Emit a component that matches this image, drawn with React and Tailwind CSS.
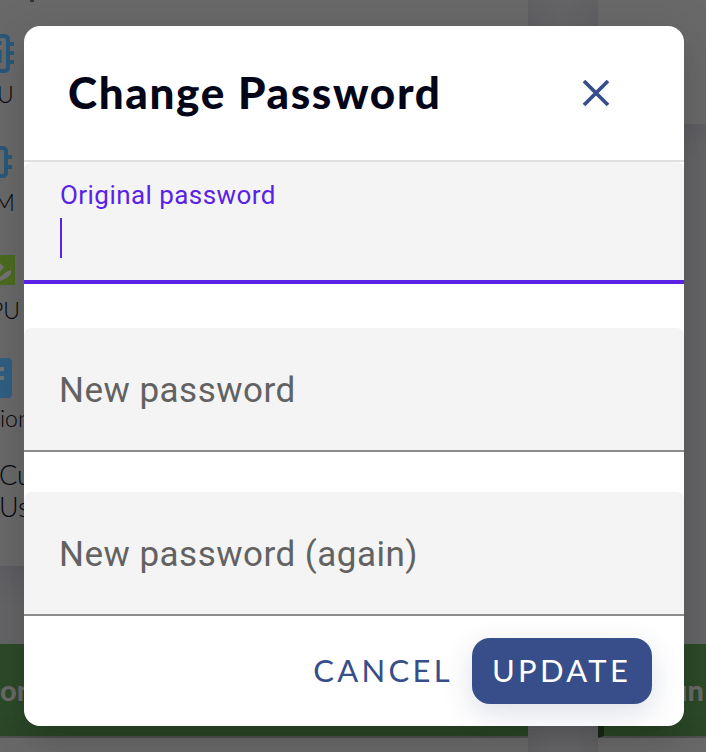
function Chip({ memory }) {
  return memory ? (
    <svg className="block h-[34px] w-[14px]" viewBox="0 0 14 34" fill="none" stroke="#28587a" strokeWidth="4">
      <path d="M-4 2H3Q6 2 6 6V26Q6 30 3 30H-4M6 11H12M6 21H12" />
    </svg>
  ) : (
    <svg className="block h-[42px] w-[16px]" viewBox="0 0 16 42" fill="none" stroke="#28587a" strokeWidth="4">
      <path d="M-4 3H4Q8 3 8 7V34Q8 38 4 38H-4M8 11H14M8 20H14M8 29H14" />
      <path d="M0 8V12M0 17V30" strokeWidth="3" />
    </svg>
  );
}

function Background() {
  return (
    <div className="absolute inset-0 flex gap-[70px] overflow-hidden bg-[#656567] font-['Lato',sans-serif] text-[#05050f]">
      <div className="flex w-[528px] shrink-0 flex-col">
        <div className="relative h-[566px] shrink-0 bg-[#696969] shadow-[0_8px_30px_rgba(40,40,70,0.2)]">
          <div className="absolute top-0 left-[30px] h-[2px] w-[4px] bg-[#333]" />
          <div className="absolute left-0 top-[33px]"><Chip /></div>
          <p className="absolute left-[-3px] top-[80px] text-[23px] leading-[28px] font-light">U</p>
          <div className="absolute left-0 top-[146px]"><Chip memory /></div>
          <p className="absolute left-[-6px] top-[188px] text-[23px] leading-[28px] font-light">M</p>
          <svg className="absolute left-0 top-[255px] h-[30px] w-[15px]" viewBox="0 0 15 30">
            <path fill="#4c6b20" d="M0 0H15V30H0Z" />
            <path fill="#737373" d="M0 8L4 12L0 17ZM0 22L6 17L11 15V19Q7 24 0 26Z" />
          </svg>
          <p className="absolute right-[508px] top-[296px] text-[23px] leading-[28px] font-light">PU</p>
          <svg className="absolute left-0 top-[358px] h-[40px] w-[12px]" viewBox="0 0 12 40">
            <path fill="#2f5f84" d="M0 0H8Q12 0 12 4V36Q12 40 8 40H0Z" />
            <path fill="#737373" d="M0 9H4V13H0ZM0 18H4V22H0Z" />
          </svg>
          <p className="absolute left-0 top-[404px] text-[23px] leading-[28px] font-light">ion</p>
          <p className="absolute left-[-1px] top-[459px] text-[27px] leading-[32px] font-light">Cu<br />Us</p>
        </div>
        <div className="mt-[78px] flex h-[94px] shrink-0 items-center border-b-2 border-[#545454] bg-[#2c4a28]">
          <span className="text-[29px] font-black text-[#696969]">on</span>
        </div>
        <div className="grow bg-[#696969] shadow-[0_0_24px_rgba(30,30,40,0.18)]" />
      </div>
      <div className="flex w-[108px] shrink-0 flex-col">
        <div className="h-[124px] shrink-0 bg-[#696969] shadow-[0_8px_30px_rgba(40,40,70,0.2)]" />
        <div className="mt-[520px] flex h-[94px] shrink-0 items-center border-b-2 border-l-[6px] border-b-[#545454] border-l-[#172a15] bg-[#2c4a28]">
          <span className="ml-[67px] text-[29px] font-black text-[#696969]">un</span>
        </div>
        <div className="grow bg-[#696969] shadow-[0_0_24px_rgba(30,30,40,0.18)]" />
      </div>
    </div>
  );
}

function EmptyField({ label }) {
  return (
    <div className="flex h-[124px] shrink-0 items-center rounded-t-lg border-b-2 border-[#8c8c8c] bg-[#f4f4f4] px-[35px] pt-[3px]">
      <span className="font-['Roboto',sans-serif] text-[35px] leading-[42px] tracking-[0.48px] text-[#626262]">{label}</span>
    </div>
  );
}

export default function App() {
  return (
    <div className="relative flex h-[752px] w-[706px] overflow-hidden px-6 pt-[26px]">
      <Background />
      <div className="relative flex h-[700px] w-[660px] shrink-0 flex-col rounded-[16px] bg-white shadow-[0_14px_24px_-10px_rgba(0,0,0,0.12),0_12px_50px_4px_rgba(0,0,0,0.12)]">
        <header className="flex h-[136px] shrink-0 items-center justify-between border-b-2 border-[#dfdfdf] pr-[74px] pl-11">
          <h2 className="pb-[3px] font-['Lato',sans-serif] text-[44px] leading-[52px] font-black tracking-[1.65px] whitespace-nowrap text-[#05051a]">Change Password</h2>
          <button aria-label="Close">
            <svg className="h-[28px] w-[28px]" viewBox="0 0 28 28" stroke="#374e8a" strokeWidth="3.8">
              <path d="M2 2L26 26M26 2L2 26" />
            </svg>
          </button>
        </header>
        <div className="h-[122px] shrink-0 rounded-t-lg border-b-4 border-[#5a22e6] bg-[#f4f4f4] px-9 pt-[17px]">
          <label className="block font-['Roboto',sans-serif] text-[26px] leading-[32px] tracking-[0.44px] text-[#5a22e6]">Original password</label>
          <div className="mt-[7px] h-10 w-[2px] bg-[#5a22e6]" />
        </div>
        <div className="mt-[44px] flex flex-col gap-10">
          <EmptyField label="New password" />
          <EmptyField label="New password (again)" />
        </div>
        <footer className="flex grow items-center justify-end gap-[19px] pr-8 font-['Lato',sans-serif] text-[31px] leading-[36px]">
          <button className="pb-[2px] tracking-[3.3px] text-[#374e8a]">CANCEL</button>
          <button className="h-[66px] w-[180px] rounded-[18px] bg-[#374e8a] pr-[1px] pb-[2px] tracking-[3.3px] text-white shadow-[0_10px_30px_rgba(50,60,110,0.16)]">UPDATE</button>
        </footer>
      </div>
    </div>
  );
}
